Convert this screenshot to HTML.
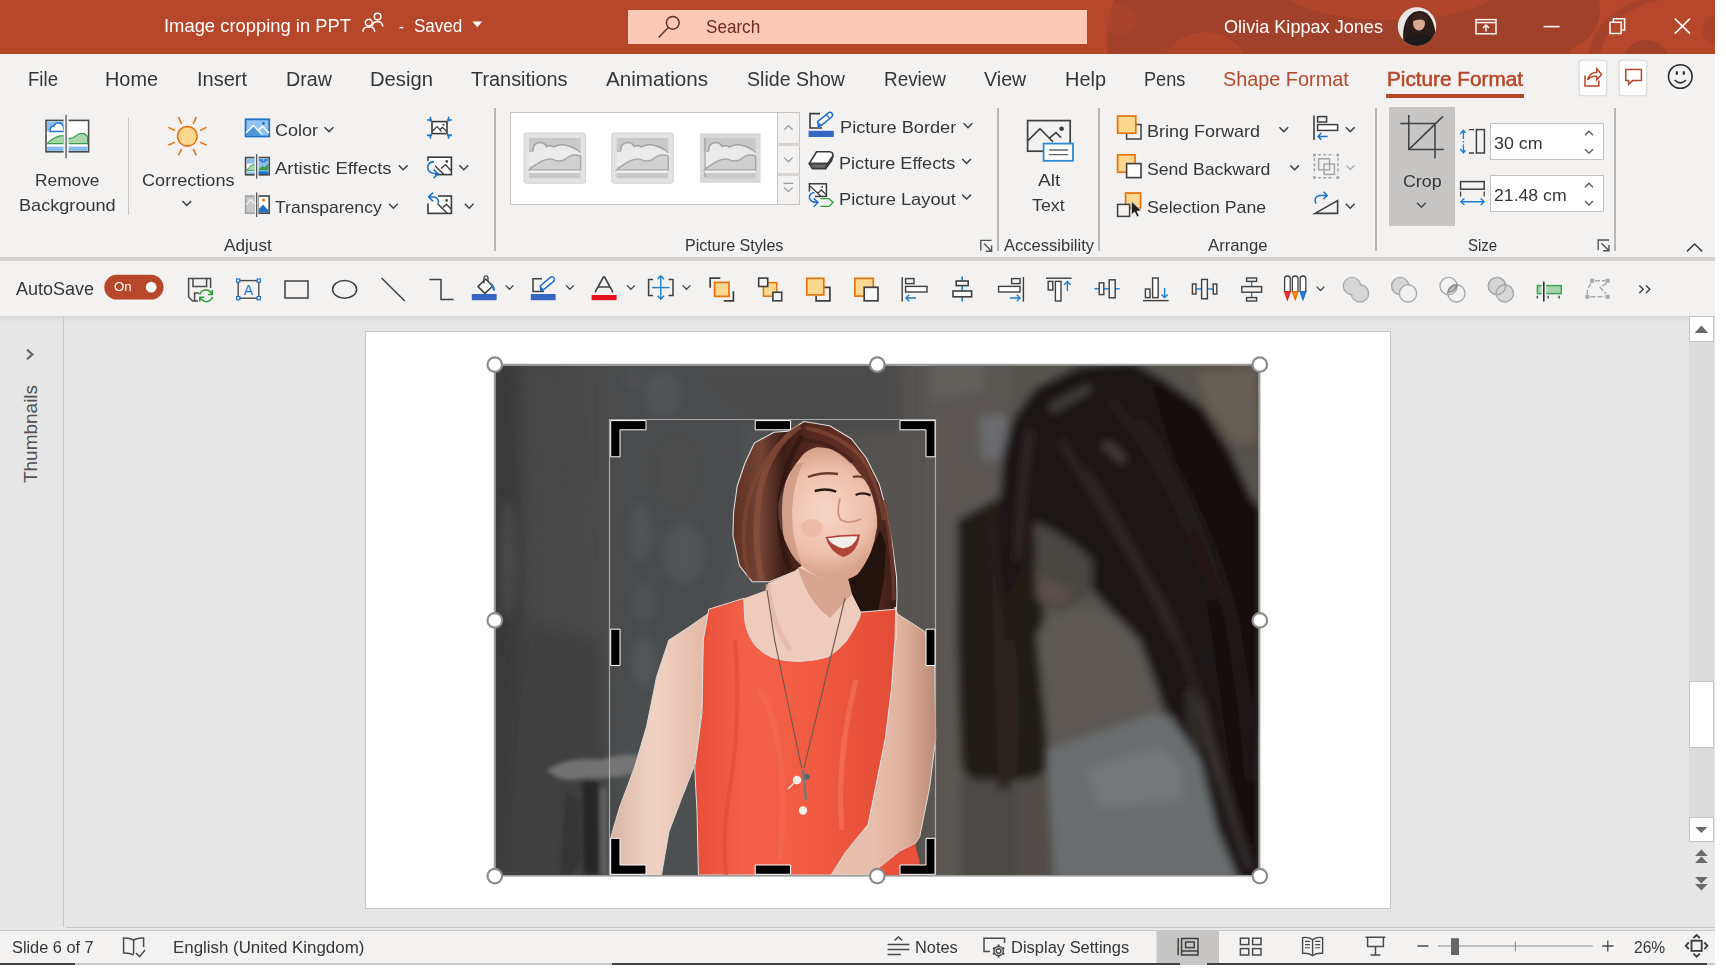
<!DOCTYPE html>
<html lang="en">
<head>
<meta charset="utf-8">
<title>Image cropping in PPT - PowerPoint</title>
<style>
*{box-sizing:border-box;margin:0;padding:0}
html,body{width:1726px;height:976px;overflow:hidden;background:#fff}
body{font-family:"Liberation Sans",sans-serif;position:relative}
#app{position:absolute;left:0;top:0;width:1715px;height:965.2px;overflow:hidden;background:#f3f2f1}
.abs{position:absolute}
#titlebar{left:0;top:0;width:1715px;height:53.5px;background:#b7472a;overflow:hidden}
#search{left:628px;top:10px;width:459.2px;height:33.7px;background:#fcc9b8}
#tabs{left:0;top:53.5px;width:1715px;height:50px;background:#f3f2f1}
#tabline{left:1386px;top:94px;width:137.5px;height:4px;background:#b7472a}
.tbtn{top:59.6px;width:28px;height:36px;background:#fff;border:1px solid #e1dfdd;border-radius:3px;box-shadow:0 0 1.5px rgba(0,0,0,.18)}
#ribbon{left:0;top:103px;width:1715px;height:154.5px;background:#f3f2f1}
#ribshadow{left:0;top:257.3px;width:1715px;height:4px;background:#d4d2d0}
#qat{left:0;top:261.3px;width:1715px;height:54.5px;background:#f3f2f1}
#qatshadow{left:0;top:315.8px;width:1715px;height:6px;background:linear-gradient(#d6d6d6,#e6e6e6)}
.vsep{width:1.6px;background:#b9b7b5;top:108px;height:142.5px}
#cropbtn{left:1389.2px;top:107px;width:65.8px;height:118.5px;background:#c8c6c4}
.inp{left:1489.6px;width:114px;height:37px;background:#fff;border:1.5px solid #c4c2c0}
#gallery{left:510.4px;top:112px;width:289.2px;height:93px;background:#fff;border:1.3px solid #c8c6c4}
#galbtns{left:777px;top:112px;width:22.6px;height:93px;background:#f3f2f1;border:1.3px solid #c8c6c4}
.galdiv{left:777px;width:22.6px;height:3px;background:#d8d6d4}
#canvas{left:0;top:315.8px;width:1715px;height:613px;background:#e6e6e6}
#sideline{left:62.6px;top:317px;width:1.4px;height:611px;background:#c9c9c9}
#slide{left:364.5px;top:331px;width:1026px;height:577.5px;background:#fff;border:1px solid #c6c6c6}
#sbtrack{left:1688.6px;top:316.4px;width:25.6px;height:526px;background:#dcdcdc}
.sbbtn{left:1688.6px;width:25.6px;background:#fff;border:1px solid #c3c3c3}
#statustop{left:0;top:927px;width:1715px;height:4px;background:#e9e9e9;border-bottom:1.4px solid #c8c6c4}
#paneline{left:66px;top:927px;width:1649px;height:1px;background:#c9c9c9}
#status{left:0;top:931px;width:1715px;height:33px;background:#f3f2f1}
#normalview{left:1157.3px;top:931px;width:61.7px;height:32.5px;background:#c8c6c4}
#bottomline{left:0;top:963px;width:1715px;height:2px;background:#c6c6c6}
.bl{top:963px;height:2.1px;background:#3f3f3f}
.t{position:absolute;white-space:nowrap;line-height:1;transform-origin:0 50%;display:inline-block}
#thumbs{position:absolute;left:30.6px;top:433.9px;font-size:19.2px;color:#505050;line-height:1;white-space:nowrap;transform:translate(-50%,-50%) rotate(-90deg) scaleX(0.99)}
svg.ov{position:absolute;left:0;top:0;overflow:visible}
</style>
</head>
<body>
<div id="app">
  <div id="titlebar" class="abs"><svg class="ov" width="1715" height="54" viewBox="0 0 1715 54">
<g fill="#a2412a">
<circle cx="1225" cy="40" r="118"/>
<rect x="1225" y="0" width="345" height="54"/>
<circle cx="1560" cy="10" r="40"/>
</g>
<g fill="#b0452a">
<circle cx="1205" cy="78" r="46"/>
<ellipse cx="1390" cy="-14" rx="110" ry="34"/>
<circle cx="1120" cy="20" r="16" opacity=".5"/>
</g>
<g fill="#a2412a">
<circle cx="1646" cy="64" r="24"/>
<path d="M1600 54 Q1610 10 1660 0 L1640 0 Q1596 14 1588 54Z" opacity=".8"/>
<circle cx="1716" cy="30" r="14" opacity=".7"/>
</g>
</svg>
</div>
  <div id="search" class="abs"></div>
  <div id="tabs" class="abs"></div>
  <div id="tabline" class="abs"></div>
  <div class="abs tbtn" style="left:1579.3px"></div>
  <div class="abs tbtn" style="left:1619.3px"></div>
  <div id="ribbon" class="abs"></div>
  <div id="cropbtn" class="abs"></div>
  <div class="abs vsep" style="left:127.7px;top:118.4px;height:96.6px;background:#c8c6c4"></div>
  <div class="abs vsep" style="left:494.2px"></div>
  <div class="abs vsep" style="left:997.2px"></div>
  <div class="abs vsep" style="left:1098.2px"></div>
  <div class="abs vsep" style="left:1375px"></div>
  <div class="abs vsep" style="left:1614.2px"></div>
  <div id="gallery" class="abs"></div>
  <div id="galbtns" class="abs"></div>
  <div class="abs galdiv" style="top:143px"></div>
  <div class="abs galdiv" style="top:172.8px"></div>
  <div class="abs inp" style="top:122.7px"></div>
  <div class="abs inp" style="top:174.6px"></div>
  <div id="ribshadow" class="abs"></div>
  <div id="qat" class="abs"></div>
  <div id="canvas" class="abs"></div>
  <div id="qatshadow" class="abs"></div>
  <div id="sideline" class="abs"></div>
  <div id="thumbs">Thumbnails</div>
  <div id="slide" class="abs"></div>
  <div id="sbtrack" class="abs"></div>
  <div class="abs sbbtn" style="top:316.4px;height:25.4px"></div>
  <div class="abs sbbtn" style="top:681.3px;height:67.2px"></div>
  <div class="abs sbbtn" style="top:817.3px;height:25px"></div>
  <div id="statustop" class="abs"></div>
  <div id="paneline" class="abs"></div>
  <div id="status" class="abs"></div>
  <div id="normalview" class="abs"></div>
  <div id="bottomline" class="abs"></div>
  <div class="abs bl" style="left:0;width:75px"></div><div class="abs bl" style="left:612px;width:568px"></div><div class="abs bl" style="left:1207px;width:500px"></div>
<svg class="ov" width="1726" height="976" viewBox="0 0 1726 976">
<defs>
<clipPath id="pc"><rect x="495.5" y="365.5" width="763" height="509.5"/></clipPath>
<filter id="b2" x="-20%" y="-20%" width="140%" height="140%"><feGaussianBlur stdDeviation="2"/></filter>
<filter id="b4" x="-20%" y="-20%" width="140%" height="140%"><feGaussianBlur stdDeviation="4"/></filter>
<filter id="b8" x="-30%" y="-30%" width="160%" height="160%"><feGaussianBlur stdDeviation="8"/></filter>
<filter id="b14" x="-40%" y="-40%" width="180%" height="180%"><feGaussianBlur stdDeviation="14"/></filter>
<linearGradient id="bgL" x1="495" x2="960" y1="0" y2="0" gradientUnits="userSpaceOnUse">
<stop offset="0" stop-color="#3e3e3e"/><stop offset=".12" stop-color="#464646"/><stop offset=".3" stop-color="#4b4d4e"/><stop offset=".55" stop-color="#505254"/><stop offset=".8" stop-color="#55524f"/><stop offset="1" stop-color="#595551"/>
</linearGradient>
<linearGradient id="hairG" x1="735" x2="897" y1="0" y2="0" gradientUnits="userSpaceOnUse">
<stop offset="0" stop-color="#5e3326"/><stop offset=".16" stop-color="#744333"/><stop offset=".3" stop-color="#3d1f17"/><stop offset=".5" stop-color="#57291e"/><stop offset=".8" stop-color="#633226"/><stop offset="1" stop-color="#371b14"/>
</linearGradient>
<linearGradient id="topG" x1="700" x2="895" y1="0" y2="0" gradientUnits="userSpaceOnUse">
<stop offset="0" stop-color="#e9503a"/><stop offset=".25" stop-color="#f4614a"/><stop offset=".6" stop-color="#f15a41"/><stop offset="1" stop-color="#e24c36"/>
</linearGradient>
<linearGradient id="armG" x1="610" x2="705" y1="0" y2="0" gradientUnits="userSpaceOnUse">
<stop offset="0" stop-color="#d9b4a2"/><stop offset=".45" stop-color="#f1d3c4"/><stop offset="1" stop-color="#e3b9a6"/>
</linearGradient>
<linearGradient id="armR" x1="870" x2="936" y1="0" y2="0" gradientUnits="userSpaceOnUse">
<stop offset="0" stop-color="#e8bfad"/><stop offset=".5" stop-color="#e0b19d"/><stop offset="1" stop-color="#b98a76"/>
</linearGradient>
<radialGradient id="faceG" cx="826" cy="512" r="62" gradientUnits="userSpaceOnUse">
<stop offset="0" stop-color="#f7d6c6"/><stop offset=".7" stop-color="#edc0ab"/><stop offset="1" stop-color="#d9a38c"/>
</radialGradient>
</defs>
<g clip-path="url(#pc)">
<rect x="495" y="365" width="764" height="510" fill="url(#bgL)"/>
<!-- left curtain texture -->
<g filter="url(#b8)">
<rect x="495" y="365" width="20" height="510" fill="#383838"/>
<path d="M525 365 L565 365 L585 620 L575 875 L535 875 Z" fill="#474747"/>
<path d="M612 380 L700 365 L745 365 L740 470 L730 560 L700 640 L660 640 L640 700 L612 760 Z" fill="#4a4c4d"/>
<path d="M700 365 L900 365 L900 430 L760 430 Z" fill="#4a4a4a"/>
<path d="M520 620 L600 640 L610 875 L500 875 Z" fill="#404040"/>
<path d="M612 760 L650 700 L640 800 L615 830Z" fill="#4c4e50"/>
</g>
<g filter="url(#b4)">
<ellipse cx="663" cy="395" rx="19" ry="23" fill="#5b5f62" opacity=".45"/>
<ellipse cx="633" cy="379" rx="8" ry="10" fill="#575b5e" opacity=".4"/>
<ellipse cx="675" cy="471" rx="17" ry="29" fill="#57524f" opacity=".35"/>
<ellipse cx="641" cy="533" rx="12" ry="29" fill="#595d60" opacity=".45"/>
<ellipse cx="684" cy="553" rx="21" ry="30" fill="#5a5e61" opacity=".5"/>
<ellipse cx="644" cy="602" rx="12" ry="20" fill="#585c5f" opacity=".4"/>
<ellipse cx="644" cy="662" rx="12" ry="26" fill="#5e6163" opacity=".45"/>
<ellipse cx="508" cy="560" rx="8" ry="60" fill="#4c4c4c" opacity=".8"/>
</g>
<g filter="url(#b2)">
<path d="M547 770 Q570 756 600 760 Q625 752 641 756 L640 772 Q610 780 585 778 Q560 784 547 770Z" fill="#7b7b7b" opacity=".85"/>
<path d="M582 782 L598 780 L600 875 L584 875Z" fill="#272727"/>
<path d="M600 790 L607 786 L608 875 L600 875Z" fill="#5e5e5e"/>
<path d="M566 790 L580 800 L582 860 L572 875 L560 875Z" fill="#353535"/>
</g>
<!-- right side -->
<g filter="url(#b4)">
<rect x="930" y="360" width="335" height="520" fill="#57534e"/>
<path d="M930 360 L1010 360 L1005 500 L960 520 L955 640 L960 880 L930 880Z" fill="#5b5752"/>
<path d="M930 360 L985 360 L985 392 L930 400Z" fill="#635f5a"/>
<path d="M961 780 L1048 780 L1050 880 L961 880Z" fill="#4c4844"/>
<path d="M1016 782 L1048 782 L1050 880 L1016 880Z" fill="#524e4a"/>
<!-- top-right shelf -->
<path d="M1185 365 L1260 365 L1260 455 L1232 450 L1200 400Z" fill="#57504a"/>
<path d="M1196 372 L1256 368 L1258 440 L1236 444 L1206 404Z" fill="#665e55"/>
<!-- bluish object on wall -->
<path d="M980 416 L1006 414 L1006 458 L982 460Z" fill="#6a6c70"/>
<!-- bag / dark left lock -->
<path d="M957 520 L998 498 L1040 520 L1048 700 L1047 770 Q1040 780 1020 780 L975 780 Q962 778 961 760 L957 640Z" fill="#241b19"/>
<!-- hair mass -->
<path d="M1079 366 L1134 362 L1165 380 L1202 407 L1230 451 L1251 496 L1262 511 L1262 880 L1238 880 L1217 830 L1207 790 L1190 750 L1165 712 L1154 680 L1140 640 L1110 610 L1092 590 Q1070 560 1040 545 Q1020 560 1000 620 L993 620 L995 548 L1000 496 L1003 451 L1014 417 L1035 388Z" fill="#1e1918"/>
<path d="M1150 380 L1202 407 L1230 451 L1251 496 L1262 511 L1262 880 L1240 880 Q1230 760 1215 660 Q1200 540 1150 380Z" fill="#151111"/>
<path d="M995 500 Q1000 600 1012 700 L1010 790 L998 790 Q992 600 990 520Z" fill="#2b201d"/>
<!-- face bit -->
<path d="M1034 522 Q1060 530 1092 560 L1092 592 L1060 612 L1036 600Z" fill="#4a4440"/>
<path d="M1036 575 L1075 590 L1064 606 L1040 600Z" fill="#5a504c"/>
<!-- shoulder -->
<path d="M1037 640 Q1040 618 1060 612 Q1100 606 1124 625 Q1150 660 1160 715 L1160 750 L1050 760 Z" fill="#5d5853"/>
<!-- garment -->
<path d="M1047 750 L1150 715 L1170 716 L1200 760 L1217 830 L1238 880 L1055 880 Z" fill="#6a6e70"/>
<path d="M1087 770 L1160 748 L1182 770 L1180 800 L1100 806Z" fill="#747879"/>
<!-- hair strands -->
<path d="M1050 410 Q1075 395 1090 388" stroke="#4c4541" stroke-width="9" fill="none" opacity=".8"/>
<path d="M1104 444 Q1116 452 1124 462" stroke="#4f4540" stroke-width="9" fill="none" opacity=".8"/>
<path d="M1060 440 Q1110 520 1160 600 Q1200 680 1220 780" stroke="#2e2422" stroke-width="10" fill="none" opacity=".7"/>
<path d="M1110 400 Q1180 480 1215 600" stroke="#2a201e" stroke-width="10" fill="none" opacity=".6"/>
<path d="M1198 700 Q1212 760 1228 800 Q1240 840 1250 870" stroke="#47423f" stroke-width="7" fill="none" opacity=".7"/>
<path d="M1190 690 Q1188 720 1200 750" stroke="#4a4643" stroke-width="6" fill="none" opacity=".6"/>
<path d="M1030 430 Q1020 500 1018 560" stroke="#3a2f2c" stroke-width="8" fill="none" opacity=".7"/>
<path d="M1085 470 Q1130 540 1175 640" stroke="#352b28" stroke-width="9" fill="none" opacity=".6"/>
<path d="M1140 420 Q1200 500 1232 620 Q1246 700 1252 780" stroke="#2c2321" stroke-width="9" fill="none" opacity=".6"/>
<path d="M1010 640 Q1016 700 1012 770" stroke="#3b2e2a" stroke-width="5" fill="none" opacity=".7"/>

</g>
<!-- woman -->
<g>
<!-- hair silhouette -->
<path d="M803.9 421.5 L829.7 425.8 L851.3 438.7 L866.3 458 L879.2 483.9 L886.8 511.8 L892.2 544.1 L896.5 576.4 L897 596 L896.4 610 L861 612.4 L850 590 L820 590 L793.2 572.1 L769.5 581.8 L752.3 581.8 L739.4 565.6 L732.9 535.5 L733.6 512 L737.2 486 L745 463 L754.4 443 L773.8 432.2 L788.9 431.1 Z" fill="url(#hairG)" stroke="#dcdcdc" stroke-width="1.1" stroke-linejoin="round"/>
<!-- dark hair behind jaw -->
<path d="M844.8 572 L870.6 552.7 L880 530 L886 545 L884 580 L878 611 L861 612 L850 592Z" fill="#23130f"/>
<path d="M884 500 Q893 550 894 600" stroke="#6d3a2b" stroke-width="4" fill="none" opacity=".8"/>
<!-- left arm -->
<path d="M709 613 L686 629 L668.9 640 L656.6 676.9 L646.7 726 L634.4 767.9 L619.7 807 L611 836.7 L609.8 875 L661.5 875 L668.9 831.8 L681 799.9 L693.5 767.9 L698.4 738.4 L703.3 689 L703.3 640 Z" fill="url(#armG)" stroke="#dcdcdc" stroke-width="1"/>
<!-- right arm -->
<path d="M895 607 L897.6 614 L924.6 631.4 L934.5 650 L935.7 738.4 L929.6 787.6 L919.7 836.8 L914.8 844 L900 851.5 L870.5 875 L831.2 875 L846 851.5 L868 824.5 L875.5 787.6 L885.3 738.4 L891.4 689 L895 640Z" fill="url(#armR)" stroke="#dcdcdc" stroke-width="1"/>
<!-- neck & chest -->
<path d="M709 611 L743.6 598.4 L765.3 590.4 L768.2 583.2 L793 572 L801.8 565.6 L842 578.8 L850 590 L860.9 612.1 L897 611 L897 640 L861 690 L745 690 L703 640Z" fill="#eecbba"/>
<path d="M798 567 L821 578.5 L840.5 580.7 L848 578 L852 594 L830 618 Q806 600 798 567Z" fill="#d7a58f"/>
<path d="M768 584 Q770 620 790 650" stroke="#e0b4a0" stroke-width="5" fill="none" opacity=".6"/>
<!-- top -->
<path d="M708.8 609.2 L743.6 598.4 L745 622.3 Q748 636 755.2 645.5 Q762 653 771.1 657 Q784 661.6 798.6 661.4 Q814 661 827.6 657 Q838 651 846.4 641.1 Q854 630 859.5 617.9 L860.9 612.1 L895.7 609.2 L895 640 L891.4 689 L885.3 738.4 L875.5 787.6 L868 824.5 L846 851.5 L831 875 L698.4 875 L697 812 L694.7 768 L702 713 L703.3 640 Z" fill="url(#topG)" stroke="#dcdcdc" stroke-width="1"/>
<path d="M900 851.5 L914.8 844 L919.7 861.3 L917.3 875 L870.5 875Z" fill="#e8513a"/>
<path d="M735 640 Q742 720 728 800 Q722 840 726 875" stroke="#dd4731" stroke-width="4" fill="none" opacity=".5"/>
<path d="M856 680 Q836 760 842 830" stroke="#f9806a" stroke-width="5" fill="none" opacity=".45"/>
<path d="M760 690 Q790 740 780 860" stroke="#f7755e" stroke-width="6" fill="none" opacity=".35"/>
<!-- face -->
<path d="M795.3 464.5 L801.8 455.9 Q808 449 816.8 447.3 Q830 447 840.5 453.7 Q850 460 857.7 471 Q864 478 868.5 486 Q873 496 875 505.4 Q877.5 516 877.1 526.9 Q875 541 870.6 552.7 Q865 565 857.7 574.2 Q850 579.5 840.5 580.7 Q830 581 821.1 578.5 Q810 573 801.8 565.6 Q795 560 791 552.7 Q784 540 780.3 526.9 Q778 516 778.1 505.4 Q780 494 784.6 483.9 Q789 473 795.3 464.5Z" fill="url(#faceG)"/>
<path d="M795.3 464.5 Q786 480 782 500 Q780 520 784 538 Q790 556 801.8 565.6 Q792 540 792 512 Q793 484 803 462Z" fill="#c48b74" opacity=".6"/>
<ellipse cx="812" cy="528" rx="11" ry="9" fill="#eaa895" opacity=".45"/>
<!-- hair strands -->
<path d="M800 426 Q770 446 760 490 Q752 540 762 580" stroke="#90543e" stroke-width="6" fill="none" opacity=".6"/>
<path d="M790 434 Q756 462 746 510 Q740 550 750 578" stroke="#7f4734" stroke-width="4" fill="none" opacity=".7"/>
<path d="M802 436 Q786 460 780 498 Q777 540 790 570" stroke="#2f1710" stroke-width="5" fill="none" opacity=".75"/>
<path d="M806 428 Q840 434 862 458 Q878 482 884 520" stroke="#8d503a" stroke-width="4" fill="none" opacity=".55"/>
<path d="M800 440 Q830 440 852 462" stroke="#3b1d15" stroke-width="4" fill="none" opacity=".6"/>
<!-- brows, eyes -->
<path d="M808 477 Q822 471.6 838 474" stroke="#6b3b2c" stroke-width="2.4" fill="none"/>
<path d="M853 477 Q860 475 866 479" stroke="#6b3b2c" stroke-width="2.2" fill="none"/>
<path d="M814.7 491 Q826 487.6 836.2 491.6" stroke="#2a1a16" stroke-width="2.6" fill="none"/>
<path d="M855.6 495 Q863 491.6 870.6 495.4" stroke="#2a1a16" stroke-width="2.4" fill="none"/>
<path d="M840 498 Q836 514 841 520 Q850 524.6 861 519" stroke="#cd947c" stroke-width="1.8" fill="none"/>
<!-- mouth -->
<path d="M825.4 537 Q842 534 860 534.6 Q857 554 843 557 Q830 552 825.4 537Z" fill="#b04438"/>
<path d="M827.6 538.2 Q843 536 857.7 536.4 Q854 547 843 548.4 Q832 545.6 827.6 538.2Z" fill="#f6efe9"/>
<!-- necklace -->
<path d="M767 590 L774.6 640 L801.7 768" stroke="#6a5a50" stroke-width="1.1" fill="none"/>
<path d="M845 598 L834.9 640 L804 768" stroke="#6a5a50" stroke-width="1.1" fill="none"/>
<path d="M803 770 L806 800" stroke="#777" stroke-width="2.4"/>
<circle cx="797" cy="780" r="4.3" fill="#f1ece6"/><circle cx="807" cy="777" r="3" fill="#5a6a70"/>
<path d="M788 789 L797 780" stroke="#e8e4de" stroke-width="1.5"/>
<circle cx="803" cy="810.5" r="4.2" fill="#f4f0ea"/>
</g>
<!-- crop frame -->
<path d="M609.5 875 V419.5 H935.5 V875" fill="none" stroke="#a9a9a9" stroke-width="1.2"/>
<g fill="#000" stroke="#fff" stroke-width="1">
<path d="M610.7 420.6 H646 V429.8 H620 V456.8 H610.7Z"/>
<path d="M755.2 420.6 H790.6 V429.8 H755.2Z"/>
<path d="M935 420.6 H900 V429.8 H926 V456.8 H935Z"/>
<path d="M610.7 629.2 H620 V665.5 H610.7Z"/>
<path d="M926 629.2 H935 V665.5 H926Z"/>
<path d="M610.7 874.3 H646 V865 H620 V838.3 H610.7Z"/>
<path d="M755.2 865 H790.6 V874.3 H755.2Z"/>
<path d="M935 874.3 H900 V865 H926 V838.3 H935Z"/>
</g>
</g>
<!-- selection outline + handles -->
<rect x="494.6" y="364.6" width="765" height="511.2" fill="none" stroke="#9b9b9b" stroke-width="1.6"/>
<g fill="#fff" stroke="#8c8c8c" stroke-width="2.2">
<circle cx="494.8" cy="364.6" r="7.3"/><circle cx="877.3" cy="364.6" r="7.3"/><circle cx="1259.8" cy="364.6" r="7.3"/>
<circle cx="494.8" cy="620.4" r="7.3"/><circle cx="1259.8" cy="620.4" r="7.3"/>
<circle cx="494.8" cy="876.1" r="7.3"/><circle cx="877.3" cy="876.1" r="7.3"/><circle cx="1259.8" cy="876.1" r="7.3"/>
</g>
</svg>

<svg class="ov" width="1726" height="110" viewBox="0 0 1726 110">
<!-- people icon -->
<g fill="none" stroke="#fff" stroke-width="1.5">
<circle cx="377.6" cy="16.6" r="3.3"/><path d="M372.3 26.5 Q372.6 21.6 377.6 21.4 Q382.4 21.6 382.8 26.5" />
<circle cx="368.8" cy="22.6" r="3.4" fill="#b7472a"/><path d="M362.8 31.6 Q363.2 26.9 368.8 26.8 Q374.4 26.9 374.8 31.6" fill="#b7472a"/>
</g>
<path d="M472.4 21.6 H482.2 L477.3 27.2Z" fill="#fff"/>
<!-- search icon -->
<g fill="none" stroke="#6e2a1a" stroke-width="1.5"><circle cx="672.8" cy="22.8" r="6.4"/><path d="M668.3 27.6 L658.6 37.6"/></g>
<!-- avatar -->
<defs><clipPath id="avc"><circle cx="1417" cy="26.5" r="19.2"/></clipPath></defs>
<g clip-path="url(#avc)">
<rect x="1397" y="6" width="40" height="41" fill="#e9e6e4"/>
<path d="M1404 47 Q1400 20 1414 12 Q1426 8 1432 20 Q1438 34 1434 47Z" fill="#2a1c1a"/>
<ellipse cx="1419" cy="23" rx="6" ry="7.6" fill="#d9a891"/>
<path d="M1400 47 Q1404 35 1419 34 Q1434 35 1437 47Z" fill="#1d1a1c"/>
<path d="M1411 22 Q1412 12 1421 13 Q1428 14 1427 24 Q1423 16 1411 22Z" fill="#3a2420"/>
</g>
<!-- present icon -->
<g fill="none" stroke="#fff" stroke-width="1.4"><rect x="1476" y="19.6" width="20" height="14.2"/><path d="M1476 22.6 H1496"/><path d="M1486 31.5 V25.4 M1483 28 L1486 25 L1489 28"/></g>
<!-- window controls -->
<path d="M1543.6 26.6 H1559.6" stroke="#fff" stroke-width="1.5"/>
<g fill="none" stroke="#fff" stroke-width="1.5"><rect x="1610" y="22.3" width="11.2" height="11.2"/><path d="M1613.4 22 V18.8 H1624.6 V30 H1621.6"/></g>
<path d="M1674.8 18.6 L1690 33.6 M1690 18.6 L1674.8 33.6" stroke="#fff" stroke-width="1.5"/>
<!-- share -->
<g fill="none" stroke="#b7472a" stroke-width="1.5">
<path d="M1585 75.5 V86 H1598.8 V80.5"/>
<path d="M1587.6 80 Q1589 72.6 1596.8 72.2 V68.8 L1601.6 74.4 L1596.8 79.8 V76.4 Q1590.6 76 1587.6 80Z"/>
</g>
<!-- comment -->
<path d="M1625.8 69.6 H1641.4 V80.6 H1632.6 L1628.6 84.4 V80.6 H1625.8Z" fill="none" stroke="#b7472a" stroke-width="1.5"/>
<!-- smiley -->
<g fill="none" stroke="#2b2b2b" stroke-width="1.6"><circle cx="1680.3" cy="76.5" r="11.8"/><path d="M1674.6 80 Q1680.3 85.6 1686 80"/></g>
<ellipse cx="1676.8" cy="73" rx="1.2" ry="1.9" fill="#2b2b2b"/><ellipse cx="1683.8" cy="73" rx="1.2" ry="1.9" fill="#2b2b2b"/>
</svg>

<svg class="ov" width="1726" height="262" viewBox="0 0 1726 262">
<defs>
<path id="chv" d="M0 0 L4.4 4.4 L8.8 0" fill="none" stroke="#444" stroke-width="1.5"/>
<path id="chs" d="M0 0 L3.9 3.9 L7.8 0" fill="none" stroke="#555" stroke-width="1.3"/>
</defs>
<!-- Remove Background -->
<g>
<rect x="46" y="120.4" width="42.6" height="31.4" fill="#fff" stroke="#4a4a4a" stroke-width="1.6"/>
<rect x="47" y="121.4" width="17" height="10" fill="#8abdee"/>
<path d="M50 131.5 Q50 126 54 126 Q55 122.6 59 123 Q62.6 123.4 63.4 127 L64 131.5Z" fill="#fff" stroke="#1e73c8" stroke-width="1.3"/>
<path d="M47 143.6 Q56 135 64 135.6 L64 143.6Z" fill="#a7d8ab" stroke="#3f9b50" stroke-width="1.2"/>
<path d="M68 138 Q72 139.4 76 135.6 Q80 132.4 84 133.6 Q87 135 87.6 137 V143.6 H68Z" fill="#a7d8ab" stroke="#3f9b50" stroke-width="1.2"/>
<rect x="47" y="146.6" width="40.6" height="4.4" fill="#8abdee"/>
<rect x="63.6" y="114.7" width="5" height="43.7" fill="#f3f2f1"/>
<rect x="65.3" y="114.7" width="1.5" height="43.7" fill="#6a6a6a"/>
</g>
<!-- Corrections sun -->
<g stroke="#e6730f" stroke-width="1.6" fill="none" stroke-linecap="butt">
<circle cx="187.4" cy="136.3" r="9.8" fill="#fbd88f"/>
<g id="rays">
<path d="M199.9 130.5 L206.5 127.4"/><path d="M193.2 123.8 L196.3 117.2"/><path d="M181.6 123.8 L178.5 117.2"/><path d="M174.9 130.5 L168.3 127.4"/>
<path d="M174.9 142.1 L168.3 145.2"/><path d="M181.6 148.8 L178.5 155.4"/><path d="M193.2 148.8 L196.3 155.4"/><path d="M199.9 142.1 L206.5 145.2"/>
</g>
</g>
<use href="#chv" x="182.4" y="201"/>
<!-- Color icon -->
<g>
<rect x="245.6" y="119.3" width="23.6" height="17.2" fill="#93c3f0" stroke="#1e73c8" stroke-width="1.8"/>
<path d="M246 133 L253.4 125.6 L262 134.6 M258 130.4 L262.6 126.4 L269 133" fill="none" stroke="#fff" stroke-width="1.5"/>
<path d="M246.5 133.4 L253.4 126.6 L262 135.6 L246.5 135.6Z" fill="#1e73c8" opacity=".55"/>
<circle cx="263.4" cy="123.4" r="1.4" fill="#1e73c8"/>
</g>
<use href="#chv" x="324.6" y="127.2"/>
<!-- Artistic Effects icon -->
<g>
<rect x="245.6" y="157.6" width="23.6" height="17.2" fill="#fff" stroke="#4a4a4a" stroke-width="1.7"/>
<rect x="246.6" y="158.6" width="8.4" height="5" fill="#8abdee"/>
<path d="M246.6 170.4 Q251 164 255.4 164.6 V170.4Z" fill="#a7d8ab" stroke="#3f9b50" stroke-width="1"/>
<rect x="246.6" y="171.6" width="8.4" height="2.4" fill="#8abdee"/>
<rect x="258" y="158.6" width="10.4" height="15.4" fill="#8abdee"/>
<path d="M258 170.2 L262 166 L265 167 L268.4 163.6 V170.2Z" fill="#3f9b50"/>
<path d="M259 160 h3 v1.6 h3 v-1.6 h3" stroke="#1e73c8" stroke-width="1.3" fill="none"/>
<rect x="258" y="171.4" width="10.4" height="2.6" fill="#1e73c8"/>
<rect x="254.6" y="154" width="4" height="24.6" fill="#f3f2f1"/>
<rect x="256" y="154" width="1.3" height="24.6" fill="#5a5a5a"/>
</g>
<use href="#chv" x="398.8" y="165.4"/>
<!-- Transparency icon -->
<g>
<rect x="245.6" y="196" width="9.8" height="17.2" fill="#c8c8c8" stroke="#a0a0a0" stroke-width="1.5"/>
<path d="M246.4 204.6 L250.6 199.6 L254.6 203.6" fill="none" stroke="#f3f2f1" stroke-width="1.3"/>
<rect x="258" y="196" width="11.2" height="17.2" fill="#fff" stroke="#4a4a4a" stroke-width="1.7"/>
<circle cx="263.6" cy="200" r="1.6" fill="#e6730f"/>
<path d="M258.8 209 L263 204.6 L268.4 210.4 V212.4 H258.8Z" fill="#1e73c8"/>
<rect x="254.8" y="192.4" width="3.6" height="24.6" fill="#f3f2f1"/>
<rect x="256" y="192.4" width="1.3" height="24.6" fill="#5a5a5a"/>
</g>
<use href="#chv" x="389" y="203.8"/>
<!-- Compress pictures -->
<g>
<rect x="432" y="121.6" width="15" height="12" fill="#fff" stroke="#3a3a3a" stroke-width="1.6"/>
<path d="M432.6 131 L437 126.6 L441.6 131.6 M440 129.6 L442.6 127.4 L446.6 131.4" fill="none" stroke="#3a3a3a" stroke-width="1.3"/>
<circle cx="443.4" cy="124.8" r="1" fill="#3a3a3a"/>
<g stroke="#1e73c8" stroke-width="1.6" fill="none">
<path d="M427 120 H432 M430.4 116.8 V121.6"/><path d="M452 120 H447 M448.6 116.8 V121.6"/>
<path d="M427 135.4 H432 M430.4 138.8 V134"/><path d="M452 135.4 H447 M448.6 138.8 V134"/>
</g>
</g>
<!-- Change picture -->
<g>
<rect x="428" y="157.2" width="23.4" height="17.4" fill="#fff" stroke="#3a3a3a" stroke-width="1.6"/>
<path d="M432 163 L444 174.6 M441 168.6 L445.4 164.6 L451 170.4" fill="none" stroke="#3a3a3a" stroke-width="1.4"/>
<circle cx="446.8" cy="161.4" r="1.3" fill="#3a3a3a"/>
<rect x="426" y="161" width="9" height="18" fill="#f3f2f1"/>
<path d="M434 161.6 Q427.6 162 427.8 168 Q428.4 173.6 437.4 173.8 M433.6 169.6 L438.2 173.8 L433.6 178.2" fill="none" stroke="#1e73c8" stroke-width="1.6"/>
</g>
<use href="#chv" x="459.4" y="165.4"/>
<!-- Reset picture -->
<g>
<rect x="428" y="196" width="23.4" height="17.4" fill="#fff" stroke="#3a3a3a" stroke-width="1.6"/>
<path d="M437 203 L447.4 213.4 M443 207.4 L446.4 204.2 L451 209" fill="none" stroke="#3a3a3a" stroke-width="1.4"/>
<circle cx="446.6" cy="200.4" r="1.3" fill="#3a3a3a"/>
<rect x="426" y="192" width="12" height="11.4" fill="#f3f2f1"/>
<path d="M433 192.6 L428.6 197 L433 201.2 M428.8 197 H433.6 Q438.6 197.4 438.6 203" fill="none" stroke="#1e73c8" stroke-width="1.6"/>
</g>
<use href="#chv" x="464.8" y="203.8"/>
<!-- gallery thumbnails -->
<g id="thumb1">
<rect x="524" y="133" width="61.6" height="50.2" rx="2" fill="#e2e2e2" stroke="#d2d2d2" stroke-width="1"/>
<rect x="529" y="138" width="51.6" height="40.2" fill="#c9c9c9"/>
<path d="M529 151 H533 Q533 142.6 540 142.4 Q545 142.6 546.4 146.6 Q550 144.6 553.6 147 Q560 143.4 567 145.4 Q575 147.4 580.6 152.6 V166 H529Z" fill="#e9e9e9"/>
<path d="M529 151 H533 Q533 142.6 540 142.4 Q545 142.6 546.4 146.6 Q550 144.6 553.6 147 Q560 143.4 567 145.4 Q575 147.4 580.6 152.6" fill="none" stroke="#a2a2a2" stroke-width="1.5"/>
<path d="M529 170 Q544 157 552.6 159.4 Q559 162.6 564.6 159.6 Q572 153 580.6 156 V170Z" fill="#c9c9c9" stroke="#9a9a9a" stroke-width="1.5"/>
<rect x="529" y="170.6" width="51.6" height="2.4" fill="#efefef"/>
<rect x="527.4" y="150" width="55" height="21" fill="#fff" opacity=".15"/>
</g>
<use href="#thumb1" x="87.7"/>
<g>
<rect x="700" y="133.4" width="60.6" height="49.4" fill="#d9d9d9"/>
<rect x="704.6" y="138" width="51" height="40.2" fill="#c9c9c9"/>
<path d="M704.6 151 H708.6 Q708.6 142.6 715.6 142.4 Q720.6 142.6 722 146.6 Q725.6 144.6 729.2 147 Q735.6 143.4 742.6 145.4 Q750.6 147.4 755.6 152.6 V166 H704.6Z" fill="#e9e9e9"/>
<path d="M704.6 151 H708.6 Q708.6 142.6 715.6 142.4 Q720.6 142.6 722 146.6 Q725.6 144.6 729.2 147 Q735.6 143.4 742.6 145.4 Q750.6 147.4 755.6 152.6" fill="none" stroke="#a2a2a2" stroke-width="1.5"/>
<path d="M704.6 170 Q719.6 157 728.2 159.4 Q734.6 162.6 740.2 159.6 Q747.6 153 755.6 156 V170Z" fill="#c9c9c9" stroke="#9a9a9a" stroke-width="1.5"/>
<path d="M705 138 V177" stroke="#a2a2a2" stroke-width="1.4"/>
<rect x="704.6" y="170.6" width="51" height="2.4" fill="#efefef"/>
<rect x="702" y="150" width="57" height="21" fill="#fff" opacity=".12"/>
</g>
<!-- gallery scroll arrows -->
<g fill="none" stroke="#9a9a9a" stroke-width="1.3">
<path d="M784.2 129.8 L788.4 125.6 L792.6 129.8"/>
<path d="M784.2 157.6 L788.4 161.8 L792.6 157.6"/>
<path d="M783.6 183.4 H793.2 M784.2 187.4 L788.4 191.6 L792.6 187.4"/>
</g>
<!-- Picture Border -->
<g>
<path d="M820 113.6 H810 V128 H822" fill="none" stroke="#3a3a3a" stroke-width="1.6"/>
<path d="M818.6 126.6 L817.6 121.6 L828.4 112.8 Q830.6 111.6 832 113.4 Q833.4 115.4 831.6 117 L821.4 125.4Z" fill="#fff" stroke="#1e6ad0" stroke-width="1.5"/>
<path d="M826.4 114.6 L829.8 118.6" stroke="#1e6ad0" stroke-width="1.3"/>
<path d="M817.6 121.8 L818.6 126.6 L822 125.2Z" fill="#1e6ad0"/>
<rect x="808.6" y="130.8" width="25.2" height="6.2" fill="#3566c4"/>
</g>
<use href="#chv" x="963.6" y="123.2"/>
<!-- Picture Effects -->
<g stroke="#3a3a3a" stroke-width="1.6" stroke-linejoin="round">
<path d="M816.6 151.8 H829.4 Q833.4 152 833 156 L827.6 163.6 H809.2 Z" fill="#fff"/>
<path d="M809.2 163.6 H827.6 L825.6 168.6 H812.4 Z" fill="#6a6a6a"/>
<path d="M827.6 163.6 L833 156 L831.4 161 L825.6 168.6Z" fill="#d0d0d0"/>
</g>
<use href="#chv" x="962.2" y="159"/>
<!-- Picture Layout -->
<g>
<rect x="809.4" y="183.8" width="17" height="12.6" fill="#fff" stroke="#3a3a3a" stroke-width="1.5"/>
<path d="M810 186 L820.6 196 M818 193 L821.4 190 L826 194.6" fill="none" stroke="#3a3a3a" stroke-width="1.3"/>
<circle cx="822.2" cy="187" r="1" fill="#3a3a3a"/>
<rect x="807" y="191.6" width="8" height="8" fill="#f3f2f1"/>
<path d="M814.4 192.4 Q809 193 809.4 198 Q810.6 202.4 817.4 202.4 M813.8 198.4 L818 202.4 L813.8 206.8" fill="none" stroke="#1e73c8" stroke-width="1.5"/>
<path d="M820.4 198.6 H829 L833 202.4 L829 206.4 H820.4" fill="#f3f2f1" stroke="#2d9a3e" stroke-width="1.4"/>
</g>
<use href="#chv" x="962.2" y="194.6"/>
<!-- dialog launchers -->
<g id="dl" fill="none" stroke="#555" stroke-width="1.4">
<path d="M991.6 240.4 H980.8 V250.6"/><path d="M984 243.6 L991.4 251 M991.6 245.4 V251.2 H985.8"/>
</g>
<use href="#dl" x="617.4" y="-0.4"/>
<!-- Alt Text -->
<g>
<rect x="1027.6" y="120.6" width="42.6" height="30.6" fill="none" stroke="#3f3f3f" stroke-width="1.7"/>
<path d="M1028 140.6 L1040 128.6 L1053 142 M1049.6 137.8 L1056 132.6 L1061 137.6" fill="none" stroke="#3f3f3f" stroke-width="1.6"/>
<circle cx="1061.6" cy="128.8" r="2.3" fill="#3a3a3a"/>
<rect x="1043.6" y="143.6" width="29.4" height="17.2" fill="#fff" stroke="#2b8ad8" stroke-width="1.8"/>
<path d="M1049 150 H1068 M1049 154.6 H1068" stroke="#666" stroke-width="1.4"/>
</g>
<!-- Bring Forward -->
<g>
<path d="M1126.6 134 V139 H1141 V124.4 H1136" fill="none" stroke="#3f3f3f" stroke-width="1.5"/>
<rect x="1117.6" y="116" width="18.2" height="17.2" fill="#fbd88f" stroke="#e6730f" stroke-width="1.7"/>
</g>
<use href="#chv" x="1279.4" y="127.2"/>
<!-- Send Backward -->
<g>
<rect x="1117.6" y="154.8" width="17.4" height="17.4" fill="#fbd88f" stroke="#e6730f" stroke-width="1.7"/>
<rect x="1126.6" y="163.6" width="14.4" height="14" fill="#fff" stroke="#3f3f3f" stroke-width="1.6"/>
</g>
<use href="#chv" x="1290.2" y="165.4"/>
<!-- Selection Pane -->
<g>
<rect x="1125.6" y="193" width="15" height="15" fill="#fbd88f" stroke="#e6730f" stroke-width="1.7"/>
<rect x="1117.6" y="204.4" width="12" height="12" fill="#f3f2f1" stroke="#3f3f3f" stroke-width="1.5"/>
<path d="M1131.4 201 V215 L1134.6 212 L1137 217 L1139.2 216 L1137 211.2 L1141.4 210.8Z" fill="#222" stroke="#f3f2f1" stroke-width=".8"/>
</g>
<!-- Align -->
<g>
<path d="M1314 115.4 V140" stroke="#3f3f3f" stroke-width="1.6"/>
<rect x="1317.6" y="116.6" width="9" height="5.4" fill="none" stroke="#3f3f3f" stroke-width="1.5"/>
<rect x="1317.6" y="124.6" width="20" height="5.8" fill="#fff" stroke="#3f3f3f" stroke-width="1.5"/>
<path d="M1327.6 136.4 H1318 M1321.4 133 L1318 136.4 L1321.4 139.8" fill="none" stroke="#1e73c8" stroke-width="1.5"/>
</g>
<use href="#chv" x="1345.8" y="127.2"/>
<!-- Group (disabled) -->
<g stroke="#a6a6a6" fill="none" stroke-width="1.5">
<rect x="1318.6" y="158.8" width="11" height="11"/><rect x="1324" y="164" width="10.4" height="10.4"/>
<path d="M1314.4 158 V174 M1338 158 V174 M1318 154.8 H1334 M1318 177.8 H1334" stroke-dasharray="3 2.2"/>
<g fill="#a6a6a6" stroke="none"><rect x="1313" y="153.6" width="2.8" height="2.8"/><rect x="1336.4" y="153.6" width="2.8" height="2.8"/><rect x="1313" y="176.2" width="2.8" height="2.8"/><rect x="1336.4" y="176.2" width="2.8" height="2.8"/></g>
</g>
<path d="M1346.4 165.4 L1350.4 169.4 L1354.4 165.4" fill="none" stroke="#b0b0b0" stroke-width="1.4"/>
<!-- Rotate -->
<g>
<path d="M1315 213.4 H1337.6 V200.6 Z" fill="none" stroke="#3f3f3f" stroke-width="1.6"/>
<path d="M1316 203.6 Q1313 197 1319.6 195.4 H1327 M1323.4 191.8 L1327.2 195.4 L1323.4 199.2" fill="none" stroke="#1e73c8" stroke-width="1.5"/>
</g>
<use href="#chv" x="1345.8" y="203.8"/>
<!-- Crop icon -->
<g fill="none" stroke="#3f3f3f" stroke-width="1.5">
<path d="M1408.8 115 V149.6 H1443.8"/><path d="M1400.4 123.6 H1435 V158.4"/><path d="M1409 149.4 L1443 116.4"/>
</g>
<use href="#chv" x="1417" y="202.8"/>
<!-- Height icon -->
<g fill="none">
<rect x="1476.4" y="129.6" width="8" height="23.4" stroke="#3f3f3f" stroke-width="1.5"/>
<path d="M1469 129.6 H1474 M1469 153 H1474" stroke="#3f3f3f" stroke-width="1.3"/>
<path d="M1463.4 131 V152 M1460.2 134 L1463.4 130.4 L1466.6 134 M1460.2 149 L1463.4 152.6 L1466.6 149" stroke="#1e7fd0" stroke-width="1.4" stroke-dasharray="8 2 1.4 2 30"/>
</g>
<!-- Width icon -->
<g fill="none">
<rect x="1460.6" y="181.6" width="23.6" height="7.6" stroke="#3f3f3f" stroke-width="1.5"/>
<path d="M1460.6 191.6 V196.6 M1484.2 191.6 V196.6" stroke="#3f3f3f" stroke-width="1.3"/>
<path d="M1461 201.8 H1484 M1464.4 198.6 L1460.8 201.8 L1464.4 205 M1480.6 198.6 L1484.2 201.8 L1480.6 205" stroke="#1e7fd0" stroke-width="1.4"/>
</g>
<!-- spinners -->
<g fill="none" stroke="#555" stroke-width="1.3">
<path d="M1585 135.2 L1589 131.2 L1593 135.2"/><path d="M1585 149.2 L1589 153.2 L1593 149.2"/>
<path d="M1585 187.2 L1589 183.2 L1593 187.2"/><path d="M1585 201 L1589 205 L1593 201"/>
</g>
<!-- collapse ribbon -->
<path d="M1687 251.4 L1694.6 244 L1702.2 251.4" fill="none" stroke="#3f3f3f" stroke-width="1.5"/>
</svg>

<svg class="ov" width="1726" height="320" viewBox="0 0 1726 320">
<defs>
<path id="qc" d="M0 0 L3.9 3.9 L7.8 0" fill="none" stroke="#444" stroke-width="1.3"/>
</defs>
<!-- autosave toggle -->
<rect x="104.3" y="274.8" width="59.2" height="24.8" rx="12.4" fill="#b7472a"/>
<circle cx="151.2" cy="287.2" r="5.4" fill="#fff"/>
<!-- save w/ sync -->
<g fill="none" stroke="#4a4a4a" stroke-width="1.5">
<path d="M198 301 H192.6 L188.6 297 V278.4 H210.6 V288"/>
<path d="M193 278.6 V286.6 H206.6 V278.6"/><path d="M194.6 301 V293 H199"/>
</g>
<g fill="none" stroke="#2d9a3e" stroke-width="1.5">
<path d="M199.6 294.6 Q201.6 289.6 206.6 290 Q210.6 290.6 211.6 294 M212.4 290 V294.4 H208"/>
<path d="M212.6 297 Q210.6 302 205.6 301.6 Q201.6 301 200.6 297.6 M199.8 301.6 V297.2 H204.2"/>
</g>
<!-- textbox -->
<g>
<rect x="238.2" y="280.6" width="20.6" height="17.6" fill="none" stroke="#4a4a4a" stroke-width="1.4"/>
<text x="248.5" y="295.2" font-size="14" font-family="Liberation Sans, sans-serif" text-anchor="middle" fill="#1e73c8">A</text>
<g fill="#fff" stroke="#1e73c8" stroke-width="1.2"><rect x="236.6" y="279" width="3.2" height="3.2"/><rect x="257.2" y="279" width="3.2" height="3.2"/><rect x="236.6" y="296.6" width="3.2" height="3.2"/><rect x="257.2" y="296.6" width="3.2" height="3.2"/></g>
</g>
<!-- rectangle, ellipse, line, elbow -->
<g fill="none" stroke="#3f3f3f" stroke-width="1.5">
<rect x="285" y="281" width="23" height="17"/>
<ellipse cx="344.6" cy="289.4" rx="12" ry="8.8"/>
<path d="M381.6 278 L404.8 301"/>
<path d="M429.4 279.4 H441 V299.4 H453.6"/>
</g>
<!-- fill bucket -->
<g>
<path d="M478 286.6 L485.6 279 L492.6 286 L485 293.4 Z" fill="#fff" stroke="#3f3f3f" stroke-width="1.5" stroke-linejoin="round"/>
<path d="M484 283.6 V277.4 Q484.4 275.8 486 275.8 Q487.6 275.8 488 277.4 V281" fill="none" stroke="#3f3f3f" stroke-width="1.3"/>
<path d="M490.6 284 Q494 286.4 494.2 290.6" fill="none" stroke="#1e73c8" stroke-width="2"/>
<rect x="471.8" y="294" width="24.8" height="6.2" fill="#3566c4"/>
</g>
<use href="#qc" x="505.6" y="285.4"/>
<!-- outline pen -->
<g>
<path d="M542 278.8 H533 V291.6 H544" fill="none" stroke="#3f3f3f" stroke-width="1.5"/>
<path d="M541 290.6 L540.2 286 L550.4 277.4 Q552.6 276 554 278 Q555.2 279.8 553.6 281.4 L543.6 289.6Z" fill="#fff" stroke="#1e6ad0" stroke-width="1.5"/>
<path d="M540.2 286.2 L541 290.6 L544.2 289.4Z" fill="#1e6ad0"/>
<rect x="530.8" y="294" width="24.8" height="6.2" fill="#3566c4"/>
</g>
<use href="#qc" x="566" y="285.4"/>
<!-- font color -->
<path d="M595 292.4 L603.4 277 H604.6 L613 292.4 M598 287 H610" fill="none" stroke="#3f3f3f" stroke-width="1.6"/>
<rect x="591.6" y="295" width="25" height="5.2" fill="#e8121d"/>
<use href="#qc" x="627" y="285.4"/>
<!-- align text -->
<g fill="none" stroke="#3f3f3f" stroke-width="1.5"><path d="M653 279.6 H648.6 V295.6 H653"/><path d="M668.6 279.6 H673 V295.6 H668.6"/></g>
<g fill="none" stroke="#1e7fd0" stroke-width="1.4"><path d="M652 287.6 H669.6"/><path d="M660.8 276 V299 M657.6 279.2 L660.8 275.8 L664 279.2 M657.6 295.8 L660.8 299.2 L664 295.8"/></g>
<use href="#qc" x="682.6" y="285.4"/>
<!-- bring forward -->
<g><path d="M710.2 287.7 V278.2 H720.3 M733.4 291.2 V300.8 H723.8" fill="none" stroke="#3f3f3f" stroke-width="1.7"/>
<rect x="714.6" y="282.4" width="14.4" height="14" fill="#fbd88f" stroke="#e6730f" stroke-width="1.7"/></g>
<!-- group -->
<g><rect x="763.4" y="282.6" width="13.4" height="13.6" fill="#fbd88f" stroke="#e6730f" stroke-width="1.5"/>
<rect x="758.7" y="278.1" width="9" height="8.4" fill="#f7f7f7" stroke="#3f3f3f" stroke-width="1.6"/><rect x="772.9" y="292.3" width="8.8" height="8.5" fill="#f7f7f7" stroke="#3f3f3f" stroke-width="1.6"/></g>
<!-- bring to front -->
<g><path d="M824 287.3 H829.9 V300.8 H816.1 V296" fill="none" stroke="#3f3f3f" stroke-width="1.7"/>
<rect x="806.8" y="278.3" width="17" height="16.6" fill="#fbd88f" stroke="#e6730f" stroke-width="1.7"/></g>
<!-- send to back -->
<g><rect x="854.9" y="278.3" width="18.4" height="17.8" fill="#fbd88f" stroke="#e6730f" stroke-width="1.7"/>
<rect x="864.2" y="287.3" width="13.8" height="13.5" fill="#f7f7f7" stroke="#3f3f3f" stroke-width="1.7"/></g>
<!-- align left -->
<g fill="none" stroke="#3f3f3f" stroke-width="1.4"><path d="M902.2 277 V301.6"/><rect x="905.6" y="278.6" width="8.4" height="5"/><rect x="905.6" y="286.4" width="21.4" height="5.6" fill="#fff"/></g>
<path d="M916 298 H906 M909.2 294.8 L906 298 L909.2 301.2" fill="none" stroke="#1e7fd0" stroke-width="1.4"/>
<!-- align center -->
<path d="M962.2 276.6 V301.6" stroke="#1e7fd0" stroke-width="1.6"/>
<g fill="#fafafa" stroke="#3f3f3f" stroke-width="1.6"><rect x="956.2" y="281" width="12" height="4.6"/><rect x="953" y="291" width="18.6" height="5.8"/></g>
<!-- align right -->
<g fill="none" stroke="#3f3f3f" stroke-width="1.4"><path d="M1023.4 277 V301.6"/><rect x="1011.6" y="278.6" width="8.4" height="5"/><rect x="998.6" y="286.4" width="21.4" height="5.6" fill="#fff"/></g>
<path d="M1010 298 H1020 M1016.8 294.8 L1020 298 L1016.8 301.2" fill="none" stroke="#1e7fd0" stroke-width="1.4"/>
<!-- align top -->
<g fill="none" stroke="#3f3f3f" stroke-width="1.4"><path d="M1046 278.2 H1071.6"/><rect x="1048.2" y="281.4" width="4.6" height="8.6"/><rect x="1055.4" y="281.4" width="5.6" height="19.6" fill="#fff"/></g>
<path d="M1067.4 291 V281.6 M1064.2 284.8 L1067.4 281.6 L1070.6 284.8" fill="none" stroke="#1e7fd0" stroke-width="1.4"/>
<!-- align middle -->
<path d="M1094.4 288.8 H1119.8" stroke="#1e7fd0" stroke-width="1.4"/>
<g fill="#f3f2f1" stroke="#3f3f3f" stroke-width="1.4"><rect x="1099.2" y="282.8" width="4.6" height="11.8"/><rect x="1109.2" y="279.8" width="6" height="18"/></g>
<!-- align bottom -->
<g fill="none" stroke="#3f3f3f" stroke-width="1.4"><path d="M1143 300.6 H1168.6"/><rect x="1145.4" y="289" width="4.6" height="8.6"/><rect x="1152.6" y="278" width="5.6" height="19.6" fill="#fff"/></g>
<path d="M1164.6 288 V297.6 M1161.4 294.4 L1164.6 297.6 L1167.8 294.4" fill="none" stroke="#1e7fd0" stroke-width="1.4"/>
<!-- distribute horiz -->
<path d="M1196 289 H1213" stroke="#1e7fd0" stroke-width="1.4"/>
<g fill="#f3f2f1" stroke="#3f3f3f" stroke-width="1.4"><rect x="1192.4" y="284" width="3.6" height="10"/><rect x="1201.6" y="279.4" width="5.8" height="19.4"/><rect x="1213.2" y="284" width="3.6" height="10"/></g>
<!-- distribute vert -->
<path d="M1251.6 281 V298" stroke="#1e7fd0" stroke-width="1.4"/>
<g fill="#f3f2f1" stroke="#3f3f3f" stroke-width="1.4"><rect x="1246.6" y="278" width="10" height="3.4"/><rect x="1241.8" y="286.6" width="19.8" height="5.6"/><rect x="1246.6" y="297.6" width="10" height="3.4"/></g>
<!-- pens -->
<g stroke="#3f3f3f" stroke-width="1.3">
<path d="M1284.6 292 V278.6 Q1284.6 276 1287.4 276 Q1290.2 276 1290.2 278.6 V292" fill="#fff"/><path d="M1284.6 291.6 H1290.2 L1287.4 299.6Z" fill="#e63b3b" stroke="#d22"/>
<path d="M1292.4 292 V278.6 Q1292.4 276 1295.2 276 Q1298 276 1298 278.6 V292" fill="#fff"/><path d="M1292.4 291.6 H1298 L1295.2 299.6Z" fill="#f0901e" stroke="#e6730f"/>
<path d="M1300.2 292 V278.6 Q1300.2 276 1303 276 Q1305.8 276 1305.8 278.6 V292" fill="#fff"/><path d="M1300.2 291.6 H1305.8 L1303 299.6Z" fill="#2b7fd8" stroke="#1e6ad0"/>
</g>
<use href="#qc" x="1316.6" y="286.6"/>
<!-- merge shapes (disabled) -->
<g stroke="#a9a9a9" stroke-width="1.4">
<circle cx="1352" cy="286" r="8.6" fill="#d6d6d6"/><circle cx="1360" cy="293.4" r="8.6" fill="#d6d6d6"/><circle cx="1352" cy="286" r="7.9" fill="#d6d6d6" stroke="none"/>
<circle cx="1400.2" cy="286" r="8.6" fill="#d6d6d6"/><circle cx="1408" cy="293.4" r="8.6" fill="#f3f2f1"/>
<circle cx="1448.6" cy="286" r="8.6" fill="none"/><circle cx="1456.4" cy="293.4" r="8.6" fill="none"/>
<circle cx="1497" cy="286" r="8.6" fill="#d6d6d6"/><circle cx="1504.8" cy="293.4" r="8.6" fill="#d6d6d6"/><circle cx="1497" cy="286" r="8.6" fill="none"/>
</g>
<path d="M1448 292.2 A8.6 8.6 0 0 1 1456.9 284.9 A8.6 8.6 0 0 1 1448 292.2Z" fill="#bdbdbd" stroke="#8a8a8a" stroke-width="1.4"/>
<!-- green align tool -->
<g><rect x="1537.4" y="285.6" width="23.8" height="8" fill="#a7d8ab" stroke="#3fa052" stroke-width="1.5"/>
<rect x="1541.6" y="284" width="4.6" height="11.4" fill="#f3f2f1"/>
<path d="M1543.8 281.4 V301.6" stroke="#222" stroke-width="1.5"/>
<path d="M1537.4 295.8 V298.6 M1548.2 295.8 V298.6 M1559.2 295.8 V298.6" stroke="#444" stroke-width="1.4"/></g>
<!-- dashed shape -->
<g fill="#a9a9a9"><rect x="1590.2" y="278.8" width="4" height="4"/><rect x="1605.6" y="278.8" width="4" height="4"/><rect x="1585.4" y="294.8" width="4" height="4"/><rect x="1605.6" y="294.8" width="4" height="4"/></g>
<path d="M1595 280.8 H1605 M1590.4 296.8 H1605 M1591 283.6 Q1587 288 1587.2 294 M1606.6 283.4 L1600 287.2 L1606 293.6" fill="none" stroke="#a9a9a9" stroke-width="1.4" stroke-dasharray="5 2"/>
<!-- more >> -->
<path d="M1639.4 285.4 L1643.2 289.2 L1639.4 293 M1646 285.4 L1649.8 289.2 L1646 293" fill="none" stroke="#3f3f3f" stroke-width="1.4"/>
</svg>

<svg class="ov" width="1726" height="976" viewBox="0 0 1726 976">
<!-- sidebar chevron -->
<path d="M27 349.6 L32.4 354.4 L27 359.2" fill="none" stroke="#6a6a6a" stroke-width="2.2"/>
<!-- scrollbar arrows -->
<path d="M1694.6 333 L1701.4 325.6 L1708.2 333Z" fill="#6a6a6a"/>
<path d="M1695.4 827 L1701.4 833 L1707.4 827Z" fill="#6a6a6a"/>
<g fill="#6a6a6a">
<path d="M1695 856 L1701.4 849.4 L1707.8 856Z"/><path d="M1695 863 L1701.4 856.4 L1707.8 863Z"/>
<path d="M1695 877 L1701.4 883.6 L1707.8 877Z"/><path d="M1695 884 L1701.4 890.6 L1707.8 884Z"/>
</g>
<!-- status: spellcheck book -->
<g fill="none" stroke="#4a4a4a" stroke-width="1.5">
<path d="M133.6 940 V954 M133.6 940 Q129 937.6 123.6 938 V953 Q129 952.6 133.6 955 M133.6 940 Q138 937.6 143.6 938 V947"/>
<path d="M136 953 L139.6 956.6 L145 950"/>
</g>
<!-- notes icon -->
<g fill="none" stroke="#4a4a4a" stroke-width="1.5">
<path d="M887.6 944.6 H909.4 M887.6 949.6 H909.4 M887.6 954.6 H901"/><path d="M894.6 940.4 L898.4 937 L902.2 940.4"/>
</g>
<!-- display settings -->
<g fill="none" stroke="#4a4a4a" stroke-width="1.5">
<path d="M990 951.6 H984 V938.2 H1004.6 V943"/>
<circle cx="998.6" cy="951" r="2.3"/>
<path d="M998.6 944.6 V946.6 M998.6 955.4 V957.4 M993 947.8 L994.8 948.8 M1002.4 953.2 L1004.2 954.2 M993 954.2 L994.8 953.2 M1002.4 948.8 L1004.2 947.8" stroke-width="2"/>
<circle cx="998.6" cy="951" r="4.6"/>
</g>
<path d="M1156.8 931 V963" stroke="#d0d0d0" stroke-width="1"/>
<!-- normal view -->
<g fill="none" stroke="#3f3f3f" stroke-width="1.5">
<path d="M1178.2 938 V955.2 M1181.6 938.4 H1198 V955 H1181.6Z"/><rect x="1185.6" y="942" width="8.6" height="5.6"/><path d="M1181.6 951 H1198"/>
</g>
<!-- slide sorter -->
<g fill="none" stroke="#4a4a4a" stroke-width="1.5">
<rect x="1240.4" y="938.2" width="8.4" height="6.4"/><rect x="1252.6" y="938.2" width="8.4" height="6.4"/><rect x="1240.4" y="948.6" width="8.4" height="6.4"/><rect x="1252.6" y="948.6" width="8.4" height="6.4"/>
</g>
<!-- reading view -->
<g fill="none" stroke="#4a4a4a" stroke-width="1.4">
<path d="M1312.6 939.6 V955.6 M1312.6 939.6 Q1308 936.6 1302.6 937.6 V953.4 Q1308 952.6 1312.6 955.6 Q1317 952.6 1322.6 953.4 V937.6 Q1317 936.6 1312.6 939.6"/>
<path d="M1305 941.4 H1310 M1305 944.6 H1310 M1305 947.8 H1310 M1315.2 941.4 H1320.2 M1315.2 944.6 H1320.2 M1315.2 947.8 H1320.2" stroke-width="1.1"/>
</g>
<!-- slideshow -->
<g fill="none" stroke="#4a4a4a" stroke-width="1.5">
<path d="M1365.6 937.2 H1385.4 M1367.6 937.4 V946.6 H1383.4 V937.4 M1375.5 946.6 V954.6 M1370.6 955 H1380.4"/>
</g>
<!-- zoom -->
<path d="M1417.4 946 H1428.4 M1602.2 946 H1613.4 M1607.8 940.4 V951.6" stroke="#4a4a4a" stroke-width="1.3"/>
<path d="M1438 946 H1592.8" stroke="#8a8a8a" stroke-width="1"/>
<path d="M1515.4 941.6 V951.4" stroke="#8a8a8a" stroke-width="1"/>
<rect x="1451" y="938.2" width="8" height="16.8" fill="#666"/>
<!-- fit to window -->
<g fill="none" stroke="#3f3f3f" stroke-width="1.9">
<rect x="1691.5" y="940.7" width="10.2" height="10.2"/>
<path d="M1693.4 938 L1696.6 935 L1699.8 938 M1693.4 953.6 L1696.6 956.6 L1699.8 953.6 M1688.8 942.4 L1685.8 945.8 L1688.8 949.2 M1704.4 942.4 L1707.4 945.8 L1704.4 949.2"/>
</g>
</svg>

<span class="t" style="left:163.7px;top:17.0px;font-size:18.2px;color:#fff;transform:scaleX(1.0107);">Image cropping in PPT</span>
<span class="t" style="left:398.7px;top:18.0px;font-size:18.2px;color:#fff;transform:scaleX(0.8247);">-</span>
<span class="t" style="left:413.7px;top:17.0px;font-size:18.2px;color:#fff;transform:scaleX(0.9364);">Saved</span>
<span class="t" style="left:705.5px;top:18.0px;font-size:18.2px;color:#6e2a1a;transform:scaleX(0.9403);">Search</span>
<span class="t" style="left:1224.0px;top:18.0px;font-size:18.2px;color:#fff;transform:scaleX(0.9954);">Olivia Kippax Jones</span>
<span class="t" style="left:27.5px;top:70.0px;font-size:19.7px;color:#363636;transform:scaleX(0.9453);">File</span>
<span class="t" style="left:105.0px;top:70.0px;font-size:19.7px;color:#363636;transform:scaleX(1.0089);">Home</span>
<span class="t" style="left:197.0px;top:70.0px;font-size:19.7px;color:#363636;transform:scaleX(1.0152);">Insert</span>
<span class="t" style="left:286.0px;top:70.0px;font-size:19.7px;color:#363636;transform:scaleX(1.0010);">Draw</span>
<span class="t" style="left:370.0px;top:70.0px;font-size:19.7px;color:#363636;transform:scaleX(1.0278);">Design</span>
<span class="t" style="left:471.0px;top:70.0px;font-size:19.7px;color:#363636;transform:scaleX(1.0098);">Transitions</span>
<span class="t" style="left:606.0px;top:70.0px;font-size:19.7px;color:#363636;transform:scaleX(1.0473);">Animations</span>
<span class="t" style="left:747.0px;top:70.0px;font-size:19.7px;color:#363636;transform:scaleX(0.9949);">Slide Show</span>
<span class="t" style="left:883.7px;top:70.0px;font-size:19.7px;color:#363636;transform:scaleX(0.9603);">Review</span>
<span class="t" style="left:983.7px;top:70.0px;font-size:19.7px;color:#363636;transform:scaleX(0.9993);">View</span>
<span class="t" style="left:1064.5px;top:70.0px;font-size:19.7px;color:#363636;transform:scaleX(1.0123);">Help</span>
<span class="t" style="left:1143.7px;top:70.0px;font-size:19.7px;color:#363636;transform:scaleX(0.9203);">Pens</span>
<span class="t" style="left:1223.0px;top:70.0px;font-size:19.7px;color:#b7472a;transform:scaleX(1.0076);">Shape Format</span>
<span class="t" style="left:1387.0px;top:70.0px;font-size:19.7px;color:#b7472a;transform:scaleX(1.0535);-webkit-text-stroke:0.55px #b7472a;">Picture Format</span>
<span class="t" style="left:35.0px;top:173.0px;font-size:16.6px;color:#363636;transform:scaleX(1.0437);">Remove</span>
<span class="t" style="left:18.9px;top:198.0px;font-size:16.6px;color:#363636;transform:scaleX(1.0919);">Background</span>
<span class="t" style="left:141.5px;top:173.0px;font-size:16.6px;color:#363636;transform:scaleX(1.0902);">Corrections</span>
<span class="t" style="left:274.9px;top:123.0px;font-size:16.6px;color:#363636;transform:scaleX(1.0868);">Color</span>
<span class="t" style="left:274.9px;top:161.0px;font-size:16.6px;color:#363636;transform:scaleX(1.1113);">Artistic Effects</span>
<span class="t" style="left:274.9px;top:200.0px;font-size:16.6px;color:#363636;transform:scaleX(1.0581);">Transparency</span>
<span class="t" style="left:840.4px;top:120.0px;font-size:16.6px;color:#363636;transform:scaleX(1.0965);">Picture Border</span>
<span class="t" style="left:839.0px;top:156.0px;font-size:16.6px;color:#363636;transform:scaleX(1.0901);">Picture Effects</span>
<span class="t" style="left:839.0px;top:192.0px;font-size:16.6px;color:#363636;transform:scaleX(1.1011);">Picture Layout</span>
<span class="t" style="left:1037.6px;top:173.0px;font-size:16.6px;color:#363636;transform:scaleX(1.1561);">Alt</span>
<span class="t" style="left:1032.2px;top:198.0px;font-size:16.6px;color:#363636;transform:scaleX(1.0743);">Text</span>
<span class="t" style="left:1147.2px;top:124.0px;font-size:16.6px;color:#363636;transform:scaleX(1.0852);">Bring Forward</span>
<span class="t" style="left:1147.2px;top:162.0px;font-size:16.6px;color:#363636;transform:scaleX(1.0616);">Send Backward</span>
<span class="t" style="left:1147.2px;top:200.0px;font-size:16.6px;color:#363636;transform:scaleX(1.0668);">Selection Pane</span>
<span class="t" style="left:1403.0px;top:174.0px;font-size:16.6px;color:#363636;transform:scaleX(1.0732);">Crop</span>
<span class="t" style="left:1494.4px;top:136.0px;font-size:16.6px;color:#363636;transform:scaleX(1.0733);">30 cm</span>
<span class="t" style="left:1494.4px;top:188.0px;font-size:16.6px;color:#363636;transform:scaleX(1.0635);">21.48 cm</span>
<span class="t" style="left:223.6px;top:237.0px;font-size:16.2px;color:#363636;transform:scaleX(1.0622);">Adjust</span>
<span class="t" style="left:685.0px;top:237.0px;font-size:16.2px;color:#363636;transform:scaleX(0.9943);">Picture Styles</span>
<span class="t" style="left:1004.0px;top:237.0px;font-size:16.2px;color:#363636;transform:scaleX(1.0209);">Accessibility</span>
<span class="t" style="left:1207.7px;top:237.0px;font-size:16.2px;color:#363636;transform:scaleX(1.0331);">Arrange</span>
<span class="t" style="left:1468.4px;top:237.0px;font-size:16.2px;color:#363636;transform:scaleX(0.9238);">Size</span>
<span class="t" style="left:16.3px;top:280.0px;font-size:18px;color:#363636;transform:scaleX(1.0005);">AutoSave</span>
<span class="t" style="left:113.7px;top:280.0px;font-size:13.5px;color:#fff;transform:scaleX(0.9825);">On</span>
<span class="t" style="left:12.2px;top:940.0px;font-size:16.8px;color:#363636;transform:scaleX(0.9718);">Slide 6 of 7</span>
<span class="t" style="left:172.7px;top:940.0px;font-size:16.8px;color:#363636;transform:scaleX(1.0054);">English (United Kingdom)</span>
<span class="t" style="left:915.2px;top:940.0px;font-size:16.8px;color:#363636;transform:scaleX(0.9762);">Notes</span>
<span class="t" style="left:1010.8px;top:940.0px;font-size:16.8px;color:#363636;transform:scaleX(0.9823);">Display Settings</span>
<span class="t" style="left:1634.2px;top:940.0px;font-size:16.8px;color:#363636;transform:scaleX(0.9287);">26%</span>
</div>
</body>
</html>
